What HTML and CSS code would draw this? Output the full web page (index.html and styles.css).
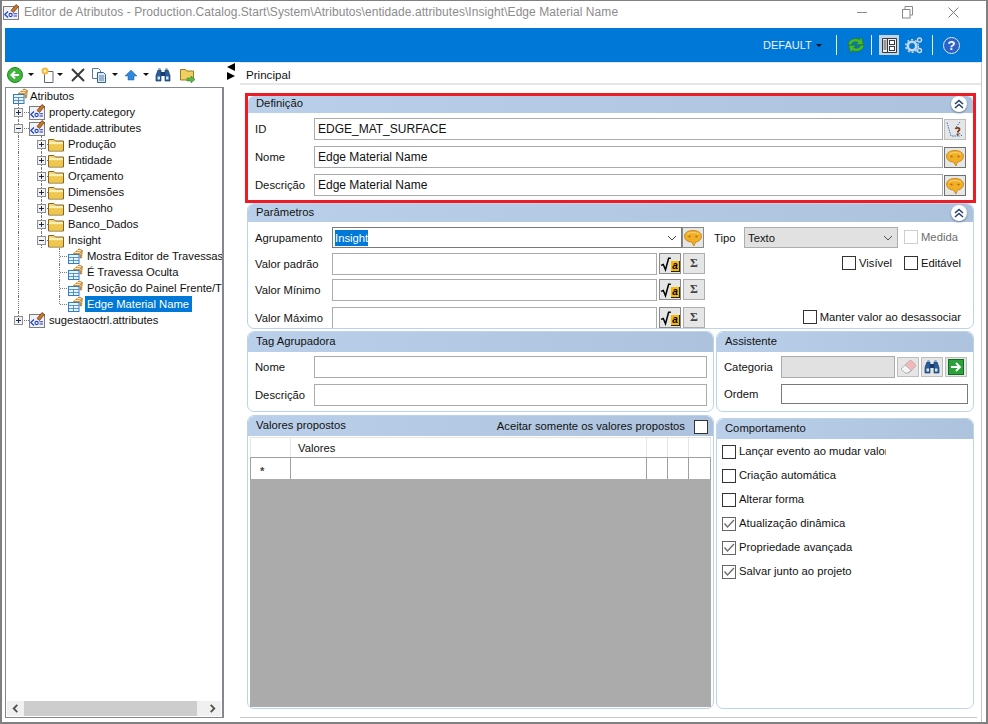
FILE: index.html
```html
<!DOCTYPE html>
<html lang="pt">
<head>
<meta charset="utf-8">
<title>Editor de Atributos</title>
<link rel="stylesheet" href="styles.css">
</head>
<body>
<svg class="defs" width="0" height="0" aria-hidden="true">
  <symbol id="i-attr" viewBox="0 0 16 16">
    <rect x=".5" y="2.500" width="15" height="13" fill="#f2f2f2" stroke="#7d7d7d"/>
    <path d="M5 7.500 1.800 10.500 5 13.500" fill="none" stroke="#1c3fd0" stroke-width="1.200"/>
    <circle cx="7.600" cy="11" r="1.600" fill="none" stroke="#1c3fd0" stroke-width="1.100"/>
    <path d="M10.500 9.800h3.500M10.500 12h3.500" stroke="#1c3fd0" stroke-width="1.100"/>
    <path d="M8 6.500 13 .5l2.500 2-5 6z" fill="#c8752a" stroke="#5f3514" stroke-width=".7"/>
  </symbol>
  <symbol id="i-item" viewBox="0 0 16 16">
    <rect x="1.500" y="6.500" width="10.500" height="9" fill="#eaf3fc" stroke="#2f7fc8"/>
    <path d="M1.500 9.500h10.500M6.500 9.500v6M1.500 12.500h10.500" stroke="#2f7fc8" stroke-width=".8"/>
    <path d="M6 6 12 .8 15.500 2.500 14.500 10H13V6z" fill="#d8a050" stroke="#8a6020" stroke-width=".5"/>
    <path d="M8 4.500h5M10 2.500h4M13.500 6h1" stroke="#fff2c8" stroke-width=".8"/>
  </symbol>
  <symbol id="i-folder" viewBox="0 0 16 16">
    <path d="M.5 3.500h5.500l1.500 1.500h8v10H.5z" fill="#f3d77c" stroke="#7f6520"/>
    <path d="M1 7h14" stroke="#fdf3c2" stroke-width="1.600"/>
    <path d="M1 8.500h14v6H1z" fill="#f0c64e"/>
  </symbol>
  <symbol id="i-plus" viewBox="0 0 9 9">
    <rect x=".5" y=".5" width="8" height="8" fill="#f2f2f2" stroke="#8f8f8f"/>
    <path d="M2 4.500h5M4.500 2v5" stroke="#1c2c50"/>
  </symbol>
  <symbol id="i-minus" viewBox="0 0 9 9">
    <rect x=".5" y=".5" width="8" height="8" fill="#f2f2f2" stroke="#8f8f8f"/>
    <path d="M2 4.500h5" stroke="#1c2c50"/>
  </symbol>
  <symbol id="i-back" viewBox="0 0 16 16">
    <circle cx="8" cy="8" r="7.500" fill="#3fb53a" stroke="#1f8a22"/>
    <path d="M12 8H5M8 4.500 4.500 8 8 11.500" fill="none" stroke="#fff" stroke-width="2"/>
  </symbol>
  <symbol id="i-new" viewBox="0 0 16 16">
    <path d="M4.500 4.500H13v11H4.500z" fill="#fff" stroke="#5a6a7a"/>
    <circle cx="5" cy="4" r="3.500" fill="#f4b942"/>
    <circle cx="5" cy="4" r="1.500" fill="#fff3b0"/>
  </symbol>
  <symbol id="i-x" viewBox="0 0 14 14">
    <path d="M1 1l12 12M13 1 1 13" stroke="#3a3a3a" stroke-width="2"/>
  </symbol>
  <symbol id="i-copy" viewBox="0 0 16 16">
    <path d="M1.500 1.500h6l2 2v8h-8z" fill="#fff" stroke="#5a7a9a"/>
    <path d="M6.500 5.500h6l2 2v8h-8z" fill="#dce9f6" stroke="#34608c"/>
    <path d="M8 9h5M8 11h5M8 13h5" stroke="#34608c" stroke-width=".8"/>
  </symbol>
  <symbol id="i-up" viewBox="0 0 14 12">
    <path d="M7 1 13 7H10v4H4V7H1z" fill="#2f86da" stroke="#1f62a8" stroke-width=".5"/>
  </symbol>
  <symbol id="i-binoc" viewBox="0 0 16 16">
    <path d="M1 8.500 3 3h3v11H1zM15 8.500 13 3h-3v11h5z" fill="#2d5c9c" stroke="#173c70" stroke-width=".7"/>
    <path d="M6 5h4v4H6z" fill="#173c70"/>
    <path d="M2.500 9.500h2.500v3h-2.500zM11 9.500h2.500v3H11z" fill="#d6e6f6"/>
    <path d="M3.500 1h2v2h-2zM10.500 1h2v2h-2z" fill="#7ca6d4"/>
  </symbol>
  <symbol id="i-move" viewBox="0 0 16 16">
    <path d="M.5 2.500h5l1 1.500h7v9H.5z" fill="#f0d060" stroke="#9a7c20"/>
    <path d="M7 11h4V9l4 3.500-4 3.500v-2H7z" fill="#5ab848" stroke="#2c7a24" stroke-width=".5"/>
  </symbol>
  <symbol id="i-refresh" viewBox="0 0 18 18">
    <path d="M1 8.500C2 3.500 7.500 1 12.500 3.500L14.500 1l2 7.500-7.500.5 2-2.500C8 5 5 6 3.800 9.500z" fill="#48b82c" stroke="#1b701a" stroke-width=".6"/>
    <path d="M17 9.500c-1 5-6.500 7.500-11.500 5L3.500 17l-2-7.500 7.500-.5-2 2.500c3 1.500 6 .5 7.200-3z" fill="#48b82c" stroke="#1b701a" stroke-width=".6"/>
  </symbol>
  <symbol id="i-layout" viewBox="0 0 20 20">
    <rect width="20" height="20" fill="#c3d4e6"/>
    <path d="M3.500 3.500h14v14h-14z" fill="#eef2f6" stroke="#3a3a3a"/>
    <path d="M8.500 3.500v14" stroke="#3a3a3a"/>
    <path d="M4.500 6h3M4.500 8h3M4.500 10h3M4.500 12h3M4.500 14h3" stroke="#3a3a3a"/>
    <rect x="10.500" y="5.500" width="5" height="4" fill="#fff" stroke="#3a3a3a"/>
    <rect x="10.500" y="11.500" width="5" height="4" fill="#fff" stroke="#3a3a3a"/>
  </symbol>
  <symbol id="i-gears" viewBox="0 0 18 18">
    <circle cx="7" cy="10" r="4.200" fill="none" stroke="#c9d8e8" stroke-width="2.600"/>
    <circle cx="7" cy="10" r="6.300" fill="none" stroke="#c9d8e8" stroke-width="1.500" stroke-dasharray="2 2"/>
    <circle cx="14.500" cy="4" r="2" fill="none" stroke="#c9d8e8" stroke-width="1.400"/>
    <circle cx="14.500" cy="14.500" r="2" fill="none" stroke="#c9d8e8" stroke-width="1.400"/>
  </symbol>
  <symbol id="i-speech" viewBox="0 0 18 18">
    <path d="M9 1.500c4.500 0 8.500 2 8.500 5.700S14 13 11.500 13l-1.500 4-2.500-4C4 13 .5 11 .5 7.200S4.500 1.500 9 1.500z" fill="#f2ae24" stroke="#c08018" stroke-width=".8"/>
    <path d="M3 5C5 3.200 13 3.200 15 5" fill="none" stroke="#fbd878"/>
    <path d="M4.500 6.800h2v1.500h-2zM11.500 6.800h2v1.500h-2z" fill="#a06a10"/>
  </symbol>
  <symbol id="i-idpick" viewBox="0 0 18 18">
    <path d="M1 1.500 5 15h9M14 1 9.500 7M16 15l-4-4" fill="none" stroke="#2a6ed8" stroke-dasharray="1.500 1"/>
    <path d="M9.500 8c.5-1.800 4.500-1.500 4 .6-.3 1.400-1.800 1-1.800 3" fill="none" stroke="#7a3a10" stroke-width="1.800"/>
    <path d="M10.700 12.500h2v2h-2z" fill="#7a3a10"/>
  </symbol>
  <symbol id="i-erase" viewBox="0 0 18 18">
    <path d="M2 11 10 3c1-1 2-1 3 0l3 3c1 1 1 2 0 3l-6 6H6z" fill="#f4b6b6" stroke="#b8b8b8"/>
    <path d="M2 11l4-4 6 5-3 3H6z" fill="#f4f4f4" stroke="#b8b8b8"/>
  </symbol>
  <symbol id="i-go" viewBox="0 0 16 16">
    <rect x=".5" y=".5" width="15" height="15" fill="#2aa13a" stroke="#156b20"/>
    <path d="M3 8h8M8 4l4 4-4 4" fill="none" stroke="#fff" stroke-width="1.800"/>
  </symbol>
  <symbol id="i-up2" viewBox="0 0 16 16">
    <path d="M4 8 8 4.500 12 8M4 12l4-3.500 4 3.500" fill="none" stroke="#24406e" stroke-width="1.500"/>
  </symbol>
  <symbol id="i-down" viewBox="0 0 10 6">
    <path d="M1 1 5 5 9 1" fill="none" stroke="#505050"/>
  </symbol>
  <symbol id="i-check" viewBox="0 0 12 12">
    <path d="M1.500 5.500 4.500 9 11 2" fill="none" stroke="#6a6a6a" stroke-width="1.300"/>
  </symbol>
  <symbol id="i-max" viewBox="0 0 11 13">
    <path d="M3 3V.5h7.500V9H8" fill="none" stroke="#8a8a8a"/>
    <rect x=".5" y="3.500" width="7.500" height="8.500" fill="#fff" stroke="#8a8a8a"/>
  </symbol>
  <symbol id="i-sqrt" viewBox="0 0 12 18">
    <path d="M1 10.500 3.500 9.500 6 15.500 9.500 2.500H12" fill="none" stroke="#000" stroke-width="1.700"/>
  </symbol>
</svg>

<div class="window">
  <header class="titlebar">
    <svg class="ic16"><use href="#i-attr"/></svg>
    <span class="title">Editor de Atributos - Production.Catalog.Start\System\Atributos\entidade.attributes\Insight\Edge Material Name</span>
    <div class="winctl">
      <span class="wc-min"></span>
      <svg class="wc-max"><use href="#i-max"/></svg>
      <svg class="wc-x" viewBox="0 0 11 11"><path d="M.5.5l10 10M10.500.5l-10 10" stroke="#7a7a7a"/></svg>
    </div>
  </header>

  <div class="ribbon">
    <span class="default">DEFAULT</span><span class="caret light"></span>
    <span class="rsep s1"></span>
    <svg class="ic-refresh"><use href="#i-refresh"/></svg>
    <span class="rsep s2"></span>
    <svg class="ic-layout"><use href="#i-layout"/></svg>
    <svg class="ic-gears"><use href="#i-gears"/></svg>
    <span class="rsep s3"></span>
    <span class="help">?</span>
  </div>

  <div class="main">
    <aside class="side">
      <div class="toolbar">
        <svg class="ic16"><use href="#i-back"/></svg><span class="caret dark c1"></span>
        <svg class="ic16 t-new"><use href="#i-new"/></svg><span class="caret dark c2"></span>
        <svg class="ic14 t-x"><use href="#i-x"/></svg>
        <svg class="ic16 t-copy"><use href="#i-copy"/></svg><span class="caret dark c3"></span>
        <svg class="ic-up t-up"><use href="#i-up"/></svg><span class="caret dark c4"></span>
        <svg class="ic16 t-bin"><use href="#i-binoc"/></svg>
        <svg class="ic16 t-move"><use href="#i-move"/></svg>
      </div>
      <div class="treebox">
        <div class="tree">
          <div class="node root"><svg class="ic16"><use href="#i-item"/></svg><span class="lbl">Atributos</span></div>
          <div class="node"><span class="cell line-tee"><svg class="exp"><use href="#i-plus"/></svg></span><svg class="ic16"><use href="#i-attr"/></svg><span class="lbl">property.category</span></div>
          <div class="node"><span class="cell line-tee"><svg class="exp"><use href="#i-minus"/></svg></span><svg class="ic16"><use href="#i-attr"/></svg><span class="lbl">entidade.attributes</span></div>
          <div class="node"><span class="cell line-v"></span><span class="cell2 line2-tee"><svg class="exp"><use href="#i-plus"/></svg></span><svg class="ic16"><use href="#i-folder"/></svg><span class="lbl">Produção</span></div>
          <div class="node"><span class="cell line-v"></span><span class="cell2 line2-tee"><svg class="exp"><use href="#i-plus"/></svg></span><svg class="ic16"><use href="#i-folder"/></svg><span class="lbl">Entidade</span></div>
          <div class="node"><span class="cell line-v"></span><span class="cell2 line2-tee"><svg class="exp"><use href="#i-plus"/></svg></span><svg class="ic16"><use href="#i-folder"/></svg><span class="lbl">Orçamento</span></div>
          <div class="node"><span class="cell line-v"></span><span class="cell2 line2-tee"><svg class="exp"><use href="#i-plus"/></svg></span><svg class="ic16"><use href="#i-folder"/></svg><span class="lbl">Dimensões</span></div>
          <div class="node"><span class="cell line-v"></span><span class="cell2 line2-tee"><svg class="exp"><use href="#i-plus"/></svg></span><svg class="ic16"><use href="#i-folder"/></svg><span class="lbl">Desenho</span></div>
          <div class="node"><span class="cell line-v"></span><span class="cell2 line2-tee"><svg class="exp"><use href="#i-plus"/></svg></span><svg class="ic16"><use href="#i-folder"/></svg><span class="lbl">Banco_Dados</span></div>
          <div class="node"><span class="cell line-v"></span><span class="cell2 line2-tee"><svg class="exp"><use href="#i-minus"/></svg></span><svg class="ic16"><use href="#i-folder"/></svg><span class="lbl">Insight</span></div>
          <div class="node"><span class="cell line-v"></span><span class="cell2"></span><span class="cell3 line3-tee"></span><svg class="ic16"><use href="#i-item"/></svg><span class="lbl">Mostra Editor de Travessas</span></div>
          <div class="node"><span class="cell line-v"></span><span class="cell2"></span><span class="cell3 line3-tee"></span><svg class="ic16"><use href="#i-item"/></svg><span class="lbl">É Travessa Oculta</span></div>
          <div class="node"><span class="cell line-v"></span><span class="cell2"></span><span class="cell3 line3-tee"></span><svg class="ic16"><use href="#i-item"/></svg><span class="lbl">Posição do Painel Frente/Tr</span></div>
          <div class="node"><span class="cell line-v"></span><span class="cell2"></span><span class="cell3 line3-end"></span><svg class="ic16"><use href="#i-item"/></svg><span class="lbl sel">Edge Material Name</span></div>
          <div class="node"><span class="cell line-end"><svg class="exp"><use href="#i-plus"/></svg></span><svg class="ic16"><use href="#i-attr"/></svg><span class="lbl">sugestaoctrl.attributes</span></div>
        </div>
        <div class="hscroll">
          <svg class="sarrow" viewBox="0 0 8 10"><path d="M6 1 2 5l4 4" fill="none" stroke="#505050" stroke-width="2"/></svg>
          <span class="thumb"></span>
          <svg class="sarrow end" viewBox="0 0 8 10"><path d="M2 1l4 4-4 4" fill="none" stroke="#505050" stroke-width="2"/></svg>
        </div>
      </div>
    </aside>

    <div class="splitter">
      <span class="tri-l"></span>
      <span class="tri-r"></span>
    </div>

    <section class="tabs">
      <div class="tabhead">Principal</div>
      <div class="tabbody">
        <div class="highlight">
          <div class="group def">
            <div class="ghead"><span>Definição</span><span class="collapse"><svg class="ic16"><use href="#i-up2"/></svg></span></div>
            <div class="defrow"><label class="dlabel">ID</label><span class="input grow">EDGE_MAT_SURFACE</span><span class="btn"><svg class="ic18"><use href="#i-idpick"/></svg></span></div>
            <div class="defrow"><label class="dlabel">Nome</label><span class="input grow">Edge Material Name</span><span class="btn btn-dark"><svg class="ic18"><use href="#i-speech"/></svg></span></div>
            <div class="defrow"><label class="dlabel">Descrição</label><span class="input grow">Edge Material Name</span><span class="btn btn-dark"><svg class="ic18"><use href="#i-speech"/></svg></span></div>
          </div>
        </div>

        <div class="group params">
          <div class="ghead"><span>Parâmetros</span><span class="collapse"><svg class="ic16"><use href="#i-up2"/></svg></span></div>
          <div class="prow first">
            <label class="plabel">Agrupamento</label>
            <span class="combo"><span class="selected">Insight</span><svg class="chev"><use href="#i-down"/></svg></span>
            <span class="btn btn-sm"><svg class="ic18"><use href="#i-speech"/></svg></span>
            <label class="tipo">Tipo</label>
            <span class="combo gray"><span>Texto</span><svg class="chev"><use href="#i-down"/></svg></span>
            <span class="chk disabled"></span><span class="chklbl muted">Medida</span>
          </div>
          <div class="prow">
            <label class="plabel">Valor padrão</label>
            <span class="input pinput"></span>
            <span class="btn btn-f"><svg class="sqrt"><use href="#i-sqrt"/></svg><b>a</b></span><span class="btn btn-s">Σ</span>
            <span class="right">
              <span class="chk"></span><span class="chklbl w-vis">Visível</span>
              <span class="chk"></span><span class="chklbl">Editável</span>
            </span>
          </div>
          <div class="prow">
            <label class="plabel">Valor Mínimo</label>
            <span class="input pinput"></span>
            <span class="btn btn-f"><svg class="sqrt"><use href="#i-sqrt"/></svg><b>a</b></span><span class="btn btn-s">Σ</span>
          </div>
          <div class="prow last">
            <label class="plabel">Valor Máximo</label>
            <span class="input pinput"></span>
            <span class="btn btn-f"><svg class="sqrt"><use href="#i-sqrt"/></svg><b>a</b></span><span class="btn btn-s">Σ</span>
            <span class="right">
              <span class="chk"></span><span class="chklbl">Manter valor ao desassociar</span>
            </span>
          </div>
        </div>

        <div class="lower">
          <div class="group tag">
            <div class="ghead tall"><span>Tag Agrupadora</span></div>
            <div class="tagrow"><label class="dlabel">Nome</label><span class="input grow"></span></div>
            <div class="tagrow"><label class="dlabel">Descrição</label><span class="input grow"></span></div>
          </div>
          <div class="group assist">
            <div class="ghead tall"><span>Assistente</span></div>
            <div class="asrow">
              <label class="alabel">Categoria</label>
              <span class="input field-gray"></span>
              <span class="btn btn-a"><svg class="ic18"><use href="#i-erase"/></svg></span>
              <span class="btn btn-a"><svg class="ic16"><use href="#i-binoc"/></svg></span>
              <span class="btn btn-a"><svg class="ic16"><use href="#i-go"/></svg></span>
            </div>
            <div class="asrow second">
              <label class="alabel">Ordem</label>
              <span class="input field-dark"></span>
            </div>
          </div>
          <div class="group values">
            <div class="ghead tall"><span>Valores propostos</span><span class="hright">Aceitar somente os valores propostos<span class="chk"></span></span></div>
            <div class="grid">
              <table class="vtable">
                <tr class="hdr"><td class="c-a"></td><td class="c-b">Valores</td><td class="c-c"></td><td class="c-c"></td><td class="c-d"></td></tr>
                <tr class="newrow"><td class="c-a star">*</td><td></td><td></td><td></td><td></td></tr>
              </table>
            </div>
          </div>
          <div class="group behav">
            <div class="ghead tall"><span>Comportamento</span></div>
            <div class="blist">
              <div class="bitem"><span class="chk"></span><span class="blbl">Lançar evento ao mudar valor</span></div>
              <div class="bitem"><span class="chk"></span><span class="blbl">Criação automática</span></div>
              <div class="bitem"><span class="chk"></span><span class="blbl">Alterar forma</span></div>
              <div class="bitem"><span class="chk on"><svg class="tick"><use href="#i-check"/></svg></span><span class="blbl">Atualização dinâmica</span></div>
              <div class="bitem"><span class="chk on"><svg class="tick"><use href="#i-check"/></svg></span><span class="blbl">Propriedade avançada</span></div>
              <div class="bitem"><span class="chk on"><svg class="tick"><use href="#i-check"/></svg></span><span class="blbl">Salvar junto ao projeto</span></div>
            </div>
          </div>
        </div>
      </div>
    </section>
  </div>
</div>
</body>
</html>
```

FILE: styles.css
```css
* { box-sizing: border-box; }
html, body { margin: 0; padding: 0; background: #fff; }
body { font: 11.25px/16px "Liberation Sans", Arial, sans-serif; color: #111; overflow: hidden; }
.defs { position: absolute; }
svg { display: block; flex: none; }
.ic16 { width: 16px; height: 16px; }
.ic14 { width: 14px; height: 14px; }
.ic18 { width: 18px; height: 18px; }

.window { width: 988px; height: 724px; border: 2px solid #808080; border-top-width: 1px; background: #fff; display: flex; flex-direction: column; padding: 0 4px 4px 3px; }

/* title bar */
.titlebar { height: 27px; display: flex; align-items: center; margin-left: -2px; padding-bottom: 5px; flex: none; }
.title { margin-left: 5px; color: #8c8c8c; font-size: 12px; letter-spacing: .065px; white-space: nowrap; }
.winctl { margin-left: auto; display: flex; align-items: center; }
.wc-min { width: 10px; height: 1px; background: #8a8a8a; margin-right: 35px; }
.wc-max { width: 11px; height: 13px; margin-right: 35px; }
.wc-x { width: 11px; height: 11px; margin-right: 23px; }

/* ribbon */
.ribbon { height: 34px; background: #0078d7; display: flex; align-items: center; color: #eaf3fb; padding-left: 758px; flex: none; }
.default { font-size: 11px; width: 48px; white-space: nowrap; }
.caret { display: block; width: 0; height: 0; border: 3px solid transparent; border-top: 3px solid #111; border-bottom: 0; flex: none; }
.caret.light { margin-left: 5px; }
.rsep { width: 1px; height: 20px; background: #e4eef8; flex: none; }
.s1 { margin-left: 14px; }
.ic-refresh { width: 18px; height: 18px; margin-left: 10px; }
.s2 { margin-left: 6px; }
.ic-layout { width: 20px; height: 20px; margin-left: 7px; }
.ic-gears { width: 18px; height: 18px; margin-left: 6px; }
.s3 { margin-left: 9px; }
.help { width: 17px; height: 17px; margin-left: 10px; border-radius: 50%; background: #2a62c8; border: 1px solid #dfe8f5; color: #fff; font: bold 13px/15px "Liberation Sans", sans-serif; text-align: center; }

/* main */
.main { flex: 1; display: flex; min-height: 0; }
.side { width: 219px; display: flex; flex-direction: column; flex: none; }
.toolbar { height: 25px; display: flex; align-items: center; padding-left: 2px; flex: none; }
.caret.dark { margin-left: 5px; }
.c1 { margin-right: 6px; }
.c2 { margin-right: 8px; margin-left: 1px !important; }
.c3 { margin-right: 6px; }
.ic-up { width: 14px; height: 12px; }
.t-copy { margin-left: 6px; }
.c4 { margin-right: 6px; }
.t-move { margin-left: 9px; }

.treebox { flex: 1; border: solid #828790; border-width: 1px 2px 1px 1px; display: flex; flex-direction: column; overflow: hidden; min-height: 0; }
.tree { flex: 1; min-height: 0; overflow: hidden; white-space: nowrap; }
.node { height: 16px; display: flex; align-items: center; position: relative; }
.root { padding-left: 6px; }
.root .lbl { margin-left: 1px; }
.root::after { content: ""; position: absolute; left: 12px; top: 12px; height: 4px; border-left: 1px dotted #777; }
.cell, .cell2, .cell3 { flex: none; height: 16px; position: relative; display: block; }
.cell { width: 23px; }
.cell2 { width: 19px; }
.cell3 { width: 19px; }
.line-v::before, .line-tee::before, .line-end::before, .line2-tee::before, .line3-tee::before, .line3-end::before {
  content: ""; position: absolute; top: 0; bottom: 0; border-left: 1px dotted #777;
}
.line-v::before, .line-tee::before, .line-end::before { left: 12px; }
.line-end::before { bottom: 8px; }
.line-tee::after, .line-end::after { content: ""; position: absolute; left: 13px; right: 0; top: 8px; border-top: 1px dotted #777; }
.line2-tee::before { left: 12px; }
.line2-tee::after { content: ""; position: absolute; left: 13px; right: 0; top: 8px; border-top: 1px dotted #777; }
.line3-tee::before, .line3-end::before { left: 11px; }
.line3-end::before { bottom: 8px; }
.line3-tee::after, .line3-end::after { content: ""; position: absolute; left: 12px; right: 0; top: 8px; border-top: 1px dotted #777; }
.exp { position: absolute; width: 9px; height: 9px; top: 4px; left: 8px; z-index: 1; }
.lbl { margin-left: 3px; padding: 0 1px; line-height: 16px; letter-spacing: -.03px; }
.sel { background: #0078d7; color: #fff; padding: 0 3px 0 2px; margin-left: 2px; }
.hscroll { height: 15px; margin: 0 1px 1px 1px; display: flex; align-items: center; background: #f0f0f0; flex: none; }
.sarrow { width: 17px; height: 9px; }
.sarrow.end { margin-left: auto; }
.thumb { width: 173px; height: 15px; background: #cdcdcd; flex: none; }

.splitter { width: 16px; flex: none; padding: 1px 0 0 3px; }
.tri-l, .tri-r { display: block; width: 0; height: 0; border: 4px solid transparent; }
.tri-l { border-right: 8px solid #000; border-left: 0; }
.tri-r { border-left: 8px solid #000; border-right: 0; margin-top: 1px; }

/* tabs */
.tabs { flex: 1; display: flex; flex-direction: column; border-top: 1px solid #e6e6e6; border-right: 1px solid #c8c8c8; min-width: 0; margin-bottom: -4px; padding-bottom: 4px; }
.tabhead { height: 22px; padding: 4px 0 0 6px; border-bottom: 2px solid #e6e6e6; flex: none; font-size: 11.6px; }
.tabbody { flex: 1; width: 737px; padding: 8px 0 0 5px; border-bottom: 1px solid #c8c8c8; }

.highlight { width: 731px; height: 110px; border: 3px solid #ed1c24; }
.group { border: 1px solid #bcd3ec; border-radius: 7px; overflow: hidden; background: #fff; }
.def { border-width: 0; border-radius: 0; height: 104px; }
.ghead { height: 18px; background: linear-gradient(90deg, #bad0ea, #adc3dd); display: flex; align-items: center; justify-content: space-between; padding: 0 6px 2px 8px; border-radius: 6px 6px 0 0; }
.def .ghead { height: 17px; padding-bottom: 3px; }
.ghead.tall { height: 20px; }
.collapse { width: 16px; height: 16px; border-radius: 50%; background: #fff; box-shadow: 0 1px 2px #6a7a90; margin-top: 1px; }
.def .collapse { margin-top: 2px; }
.defrow { display: flex; align-items: flex-start; height: 22px; margin-top: 6px; padding-left: 7px; }
.ghead + .defrow { margin-top: 5px; }
.dlabel { width: 59px; line-height: 22px; flex: none; }
.input { display: block; height: 22px; border: 1px solid #ababab; background: #fff; padding: 0 3px; line-height: 20px; font-size: 12px; }
.grow { flex: 1; min-width: 0; }
.defrow .grow { margin-right: 1px; }
.btn { flex: none; display: flex; align-items: center; justify-content: center; width: 22px; height: 21px; background: #e6e6e6; border: 1px solid #bdbdbd; }
.defrow .btn { margin-right: 7px; margin-top: 1px; }
.btn-dark { border-color: #707070; }

.params { margin: 0 0 0 2px; width: 727px; height: 126px; }
.prow { display: flex; align-items: flex-start; height: 22px; margin-top: 4px; padding-left: 7px; }
.first { margin-top: 5px; }
.last { margin-top: 6px; }
.plabel { width: 77px; line-height: 22px; flex: none; }
.combo { display: flex; align-items: center; justify-content: space-between; width: 350px; height: 21px; border: 1px solid #7a7a7a; background: #fff; padding: 0 4px 0 2px; flex: none; }
.selected { background: #0078d7; color: #fff; }
.chev { width: 10px; height: 6px; }
.btn-sm { border-color: #8a8a8a; }
.tipo { margin-left: 10px; width: 30px; line-height: 22px; flex: none; }
.combo.gray { width: 154px; background: #e1e1e1; border-color: #adadad; padding-left: 3px; }
.chk { display: block; width: 14px; height: 14px; border: 1px solid #333; background: #fff; flex: none; }
.chk.disabled { border-color: #cfcfcf; margin: 3px 0 0 6px; }
.chklbl { margin-left: 3px; line-height: 20px; white-space: nowrap; }
.muted { color: #6d6d6d; }
.pinput { width: 325px; }
.btn-f { width: 22px; height: 21px; margin-left: 2px; background: #e6e6e6; border-color: #8a8a8a; }
.sqrt { width: 11px; height: 16px; }
.btn-f b { display: block; background: #f6b800; color: #000; font: italic bold 10px/10px "Liberation Sans", sans-serif; padding: 0 1px; margin: 5px 0 0 0; border: 1px solid #222; border-width: 0 1px 1px 0; }
.btn-s { width: 22px; height: 21px; margin-left: 2px; border-color: #adadad; color: #444; font: bold 12px/19px "Liberation Serif", serif; }
.right { margin-left: auto; display: flex; align-items: center; height: 20px; padding-right: 12px; }
.w-vis { margin-right: 12px; }

.lower { display: grid; grid-template-columns: 467px 258px; column-gap: 2px; row-gap: 3px; margin: 2px 0 0 2px; }
.tag, .assist { height: 81px; }
.tagrow { display: flex; height: 22px; padding: 4px 6px 0 7px; box-sizing: content-box; }
.tagrow + .tagrow { padding-top: 6px; }
.asrow { display: flex; align-items: center; height: 22px; padding: 4px 0 0 7px; box-sizing: content-box; }
.second { padding-top: 6px; align-items: flex-start; }
.alabel { width: 57px; flex: none; }
.second .alabel { line-height: 20px; }
.field-gray { width: 114px; background: #e1e1e1; }
.field-dark { width: 187px; height: 20px; border-color: #7a7a7a; }
.btn-a { width: 22px; height: 20px; margin-left: 2px; }
.asrow .btn-a:first-of-type { margin-left: 1px; }

.values { height: 294px; }
.hright { display: flex; align-items: center; gap: 9px; margin-top: 2px; margin-right: -1px; }
.hright .chk { margin-top: 1px; }
.grid { margin: 1px 2px 0 2px; width: 461px; height: 270px; background: #ababab; }
.vtable { width: 461px; border-collapse: collapse; table-layout: fixed; background: #fff; }
.vtable td { padding: 0 0 0 7px; font-size: 11.25px; }
.hdr td { height: 20px; border: 1px solid #e4e4e4; border-bottom-color: #a0a0a0; }
.newrow td { height: 21px; border: 1px solid #a0a0a0; border-bottom: 0; }
.c-a { width: 40px; }
.c-c { width: 21px; }
.c-d { width: 22px; }
.vtable .star { padding: 5px 0 0 9px; color: #444; font-weight: bold; line-height: 14px; }

.behav { height: 291px; margin-top: 3px; }
.blist { padding: 6px 0 0 5px; display: flex; flex-direction: column; }
.bitem { height: 24px; display: flex; align-items: flex-start; }
.chk.on { border-color: #666; display: flex; align-items: center; justify-content: center; }
.tick { width: 12px; height: 12px; }
.blbl { margin-left: 3px; width: 147px; overflow: hidden; white-space: nowrap; line-height: 12px; height: 14px; }
```
